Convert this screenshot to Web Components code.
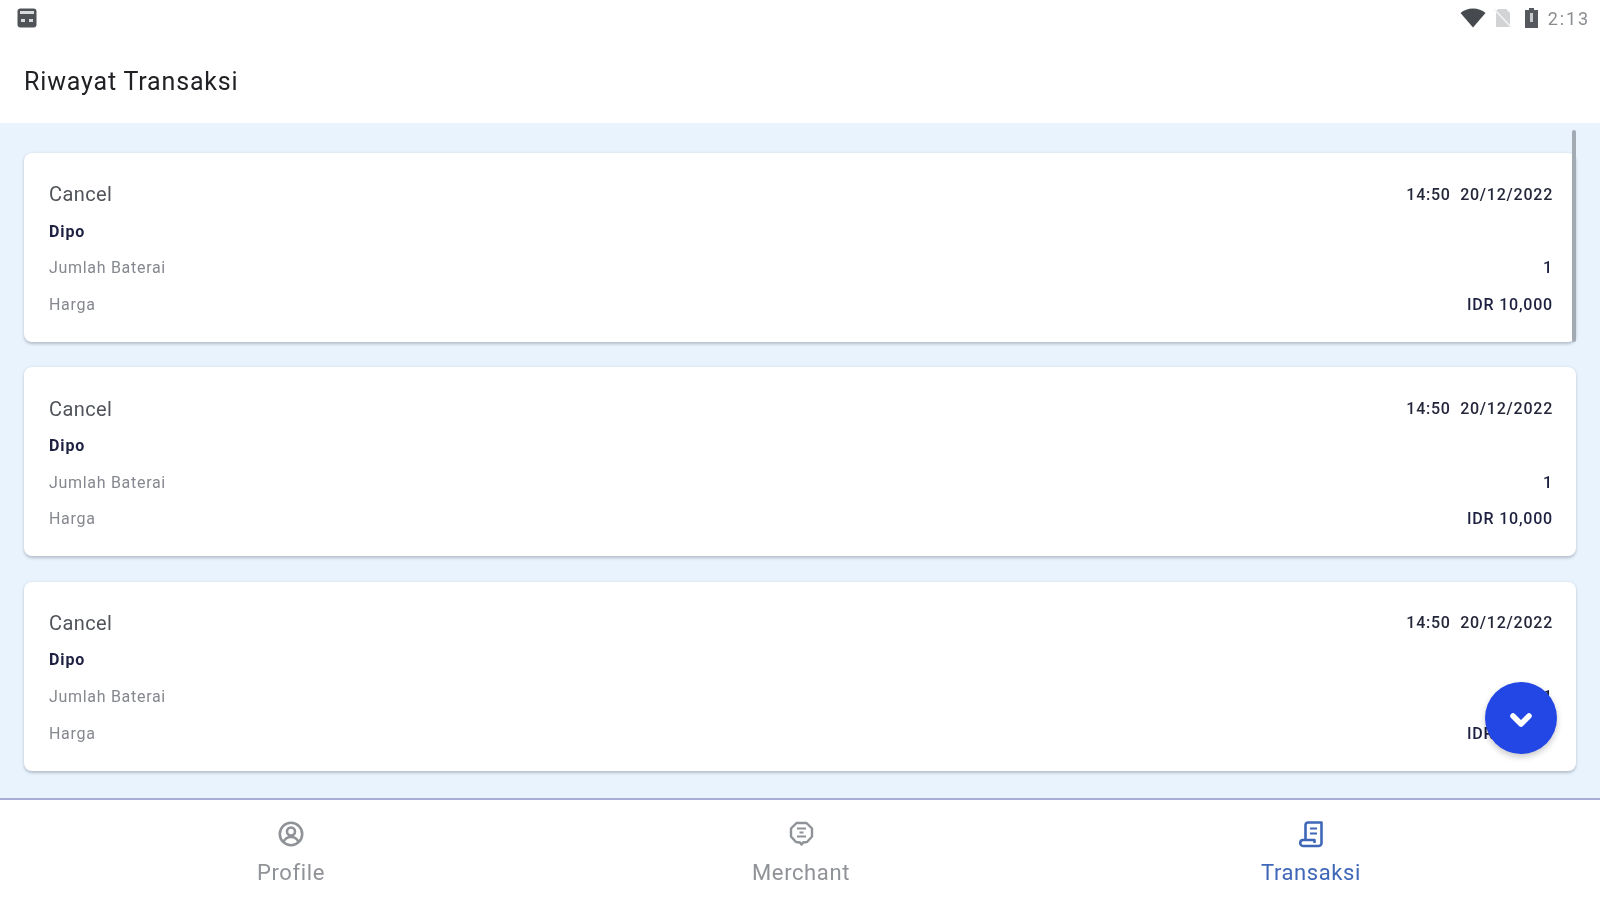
<!DOCTYPE html>
<html>
<head>
<meta charset="utf-8">
<title>Riwayat Transaksi</title>
<style>
    html, body { margin: 0; height: 100%; }
    body { font-family: Roboto, "Liberation Sans", sans-serif; background: #fff; }
    tx-app { height: 900px; }
</style>
</head>
<body>
<tx-app>
    <status-bar slot="top"></status-bar>
    <app-bar slot="top">Riwayat Transaksi</app-bar>
    <tx-card status="Cancel" time="14:50  20/12/2022" name="Dipo" qty="1" price="IDR 10,000"></tx-card>
    <tx-card status="Cancel" time="14:50  20/12/2022" name="Dipo" qty="1" price="IDR 10,000"></tx-card>
    <tx-card status="Cancel" time="14:50  20/12/2022" name="Dipo" qty="1" price="IDR 10,000"></tx-card>
    <bottom-nav slot="bottom">
        <nav-item label="Profile" icon="profile"></nav-item>
        <nav-item label="Merchant" icon="merchant"></nav-item>
        <nav-item label="Transaksi" icon="receipt" active></nav-item>
    </bottom-nav>
</tx-app>

<script>
// 1. Icons
const icons = {
    profile: `<svg width="26" height="26" viewBox="0 0 26 26" fill="none" stroke="currentColor" stroke-width="2.6">
        <circle cx="13" cy="13" r="11.200"/><circle cx="13" cy="10.500" r="4"/>
        <path d="M5.500 21c1.500-3.500 4-5 7.500-5s6 1.500 7.500 5"/></svg>`,
    merchant: `<svg width="25" height="26" viewBox="0 0 25 26" fill="none" stroke="currentColor" stroke-width="2.4">
        <path d="M7.500 2h10l5.500 5.500v8L18 21l-4 .5-1.500 2-1.500-2-4-.5-5-5.500v-8z" stroke-linejoin="round"/>
        <path d="M8 7.500h9M10.500 11.500h4M8 15.500h9" stroke-width="1.900"/></svg>`,
    receipt: `<svg width="24" height="27" viewBox="0 0 24 27" fill="none" stroke="currentColor" stroke-width="2.6" stroke-linejoin="round">
        <path d="M6.500 18V4a2.500 2.500 0 0 1 2.500-2.500h13.500v20.500a3 3 0 0 1-3 3H4a2.800 2.800 0 0 1-2.700-3.200c0-1.700 1.200-2.800 2.700-2.800h11.500v3"/>
        <path d="M11 7.500h7M11 12.500h7" stroke-width="2.200"/></svg>`
};

// 2. Components
class TxApp extends HTMLElement {
    constructor() {
        super();
        this.attachShadow({ mode: 'open' });
        this.shadowRoot.innerHTML = `
            <style>
                :host { display: flex; flex-direction: column; background: #fff; overflow: hidden; filter: blur(.45px); }
                main {
                    position: relative;
                    flex: 1;
                    min-height: 0;
                    overflow: hidden;
                    background: #e8f3fd;
                    padding: 30px 24px 0 24px;
                    display: flex;
                    flex-direction: column;
                    gap: 25.300px;
                }
                .scrollbar {
                    position: absolute; top: 7px; right: 24px; width: 4px; height: 212px;
                    background: #a2abb3; border-radius: 2px;
                }
                .fab {
                    position: absolute; right: 43px; bottom: 44px; width: 72px; height: 72px;
                    border-radius: 50%; background: #2347e5; color: #fff;
                    display: flex; align-items: center; justify-content: center;
                    box-shadow: 0 3px 6px rgba(0,0,0,.22);
                }
                .fab svg { margin-top: 4px; }
            </style>
            <slot name="top"></slot>
            <main>
                <slot></slot>
                <div class="scrollbar"></div>
                <div class="fab">
                    <svg width="24" height="16" viewBox="0 0 24 16" fill="none" stroke="currentColor" stroke-width="5.500" stroke-linecap="round" stroke-linejoin="round"><path d="M4 4l8 8 8-8"/></svg>
                </div>
            </main>
            <slot name="bottom"></slot>
        `;
    }
}

class StatusBar extends HTMLElement {
    constructor() {
        super();
        this.attachShadow({ mode: 'open' });
        this.shadowRoot.innerHTML = `
            <style>
                :host {
                    display: flex; align-items: center; justify-content: space-between;
                    height: 36px; padding: 0 10px 0 17px; color: #5f6368; font-size: 18px;
                }
                .right { display: flex; align-items: center; gap: 10px; }
                .wifi { margin-right: -3px; }
                .battery { margin-left: 2px; margin-right: -1px; }
                .time { letter-spacing: 1.900px; color: #8a8d90; }
            </style>
            <svg width="20" height="20" viewBox="0 0 20 20">
                <rect x="0.500" y="0.500" width="19" height="19" rx="3" fill="#4f5256"/>
                <rect x="3" y="3" width="14" height="3" fill="#d8d9da"/>
                <rect x="4" y="11" width="4" height="3" fill="#d8d9da"/>
                <rect x="12" y="11" width="4" height="3" fill="#d8d9da"/>
            </svg>
            <div class="right">
                <svg class="wifi" width="26" height="20" viewBox="0 0 26 20"><path d="M0.500 5C4 2 8 0.500 13 0.500S22 2 25.500 5L13 19.500z" fill="#46494d"/></svg>
                <svg width="19" height="20" viewBox="0 0 19 20"><path d="M5 1h8l4 4v14H3V3z" fill="#d2d3d5"/><path d="M1 1l17 18" stroke="#f4f4f4" stroke-width="1.500"/></svg>
                <svg class="battery" width="15" height="20" viewBox="0 0 15 20"><path d="M5 0h5v2h4v18H1V2h4z" fill="#55585c"/><path d="M7.500 5v9" stroke="#c8c9cb" stroke-width="3"/></svg>
                <span class="time">2:13</span>
            </div>
        `;
    }
}

class AppBar extends HTMLElement {
    constructor() {
        super();
        this.attachShadow({ mode: 'open' });
        this.shadowRoot.innerHTML = `
            <style>
                :host {
                    display: flex; align-items: center; height: 87px; padding: 3px 24px 0 24px;
                    font-size: 25px; color: #202124; letter-spacing: .83px; box-sizing: border-box;
                }
            </style>
            <slot></slot>
        `;
    }
}

class TxCard extends HTMLElement {
    constructor() {
        super();
        this.attachShadow({ mode: 'open' });
        const a = n => this.getAttribute(n);
        this.shadowRoot.innerHTML = `
            <style>
                :host {
                    display: grid;
                    grid-template-columns: 1fr auto;
                    grid-auto-rows: 36.700px;
                    align-items: center;
                    flex: none;
                    height: 189px;
                    width: 1552px;
                    box-sizing: border-box;
                    padding: 23px 23px 0 25px;
                    background: #fff;
                    border-radius: 8px;
                    box-shadow: 0 1.500px 3px rgba(60,70,90,.3);
                    font-size: 16px;
                }
                .status { font-size: 20px; color: #50545a; letter-spacing: .4px; }
                .time { font-weight: 500; color: #24273a; letter-spacing: .76px; white-space: pre; }
                .name { font-weight: 700; color: #1d2040; grid-column: 1 / -1; letter-spacing: .9px; }
                .label { color: #85888e; letter-spacing: .7px; }
                .val { font-weight: 500; color: #1d2040; justify-self: end; letter-spacing: .8px; }
            </style>
            <span class="status">${a('status')}</span><span class="time">${a('time')}</span>
            <span class="name">${a('name')}</span>
            <span class="label">Jumlah Baterai</span><span class="val">${a('qty')}</span>
            <span class="label">Harga</span><span class="val">${a('price')}</span>
        `;
    }
}

class BottomNav extends HTMLElement {
    constructor() {
        super();
        this.attachShadow({ mode: 'open' });
        this.shadowRoot.innerHTML = `
            <style>
                :host {
                    display: grid; grid-template-columns: repeat(3, 510px); height: 102px; padding: 0 34px 0 36px;
                    box-sizing: border-box; background: #fff; border-top: 2px solid #a9aed6;
                }
            </style>
            <slot></slot>
        `;
    }
}

class NavItem extends HTMLElement {
    constructor() {
        super();
        this.attachShadow({ mode: 'open' });
        this.shadowRoot.innerHTML = `
            <style>
                :host {
                    display: flex; flex-direction: column; align-items: center;
                    padding-top: 20px; gap: 12px; color: #8f9297;
                    font-size: 22px; letter-spacing: .6px;
                }
                :host([active]) { color: #3f67b8; }
                .icon { height: 28px; display: flex; align-items: center; }
            </style>
            <div class="icon">${icons[this.getAttribute('icon')]}</div>
            <span>${this.getAttribute('label')}</span>
        `;
    }
}

customElements.define('tx-app', TxApp);
customElements.define('status-bar', StatusBar);
customElements.define('app-bar', AppBar);
customElements.define('tx-card', TxCard);
customElements.define('bottom-nav', BottomNav);
customElements.define('nav-item', NavItem);
</script>
</body>
</html>
